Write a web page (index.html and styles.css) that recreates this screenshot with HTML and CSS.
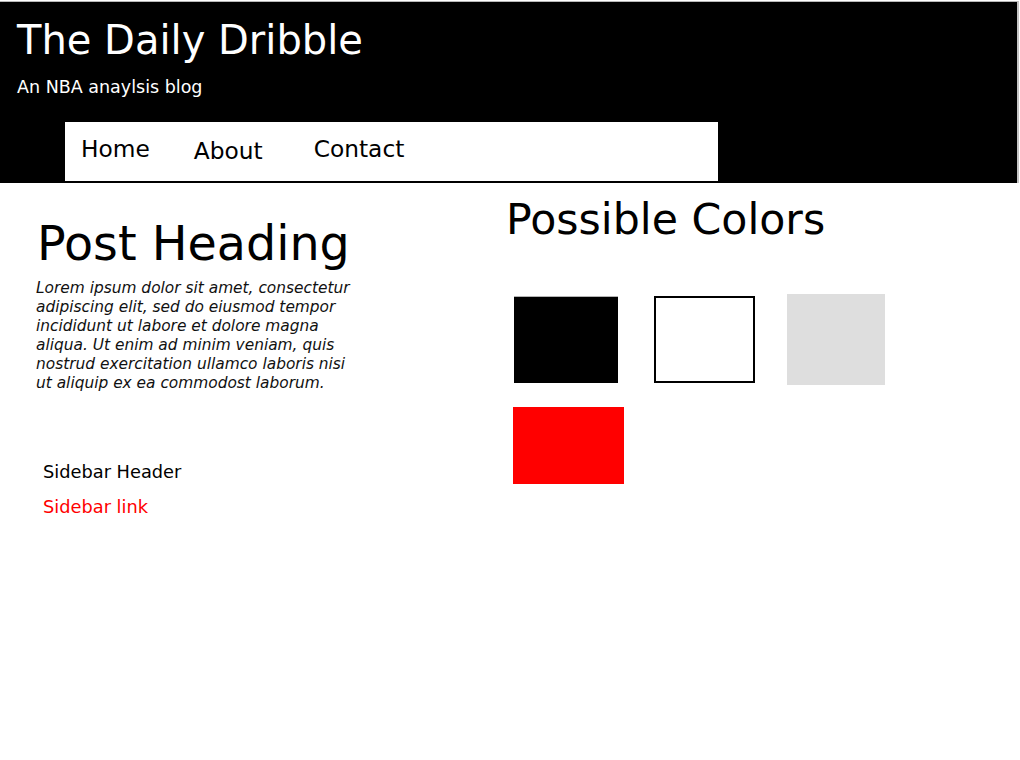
FILE: index.html
```html
<!DOCTYPE html>
<html lang="en">
<head>
<meta charset="utf-8">
<title>The Daily Dribble</title>
<link rel="stylesheet" href="styles.css">
</head>
<body>
<header class="site-header">
  <h1 class="site-title">The Daily Dribble</h1>
  <p class="site-tagline">An NBA anaylsis blog</p>
  <nav class="site-nav">
    <a class="nav-link nav-home" href="#">Home</a>
    <a class="nav-link nav-about" href="#">About</a>
    <a class="nav-link nav-contact" href="#">Contact</a>
  </nav>
</header>
<main class="content">
  <section class="left-col">
    <h2 class="post-heading">Post Heading</h2>
    <p class="post-body">Lorem ipsum dolor sit amet, consectetur adipiscing elit, sed do eiusmod tempor incididunt ut labore et dolore magna aliqua. Ut enim ad minim veniam, quis nostrud exercitation ullamco laboris nisi ut aliquip ex ea commodost laborum.</p>
    <aside class="sidebar">
      <h3 class="sidebar-header">Sidebar Header</h3>
      <a class="sidebar-link" href="#">Sidebar link</a>
    </aside>
  </section>
  <section class="right-col">
    <h2 class="colors-heading">Possible Colors</h2>
    <div class="swatches">
      <div class="swatch swatch-black"></div>
      <div class="swatch swatch-white"></div>
      <div class="swatch swatch-grey"></div>
      <div class="swatch swatch-red"></div>
    </div>
  </section>
</main>
</body>
</html>
```

FILE: styles.css
```css
html, body {
  margin: 0;
  padding: 0;
  background: #ffffff;
}

body {
  font-family: "DejaVu Sans", "Liberation Sans", sans-serif;
  color: #000000;
}

.site-header {
  background: #000000;
  color: #ffffff;
  border-top: 1px solid #b8b8b8;
  border-right: 2px solid #c4c4c4;
  margin-top: 1px;
  width: 1019px;
  height: 182px;
  box-sizing: border-box;
  padding-top: 15px;
  display: flex;
  flex-direction: column;
}

.site-title {
  margin: 0 0 0 17px;
  font-size: 40px;
  font-weight: normal;
  line-height: normal;
}

.site-tagline {
  margin: 14px 0 0 17px;
  font-size: 17.5px;
  line-height: normal;
}

.site-nav {
  margin: 25px 0 0 65px;
  width: 653px;
  height: 59px;
  background: #ffffff;
  display: flex;
  align-items: flex-start;
  box-sizing: border-box;
  padding: 13px 0 0 16px;
}

.nav-link {
  color: #000000;
  text-decoration: none;
  font-size: 23.3px;
  line-height: normal;
}

.nav-home {
  margin-right: 44px;
}

.nav-about {
  margin-top: 2px;
  margin-right: 51px;
}

.content {
  display: grid;
  grid-template-columns: 506px 1fr;
}

.left-col {
  padding-left: 33px;
}

.post-heading {
  margin: 33px 0 0 4px;
  font-size: 47.6px;
  font-weight: normal;
  line-height: normal;
}

.post-body {
  margin: 8px 0 0 3px;
  width: 323px;
  font-size: 15.4px;
  line-height: 19px;
  font-style: italic;
  font-weight: 200;
  color: #111111;
}

.sidebar {
  margin: 68px 0 0 10px;
  display: flex;
  flex-direction: column;
}

.sidebar-header {
  margin: 0;
  font-size: 17.8px;
  font-weight: normal;
  line-height: 21px;
}

.sidebar-link {
  margin-top: 14px;
  color: #ff0000;
  text-decoration: none;
  font-size: 17.8px;
  line-height: 21px;
}

.colors-heading {
  margin: 11px 0 0 0;
  font-size: 42.7px;
  font-weight: normal;
  line-height: normal;
}

.swatches {
  margin: 50px 0 0 7px;
  width: 420px;
  display: flex;
  flex-wrap: wrap;
  align-items: center;
  row-gap: 22px;
}

.swatch {
  box-sizing: border-box;
}

.swatch-black {
  width: 104px;
  height: 87px;
  margin-left: 1px;
  background: #000000;
  border-top: 1px solid #b4b4b4;
}

.swatch-white {
  width: 101px;
  height: 87px;
  margin-left: 36px;
  background: #ffffff;
  border: 2px solid #000000;
}

.swatch-grey {
  width: 98px;
  height: 91px;
  margin-left: 32px;
  background: #dedede;
}

.swatch-red {
  width: 111px;
  height: 77px;
  background: #ff0000;
}
```
